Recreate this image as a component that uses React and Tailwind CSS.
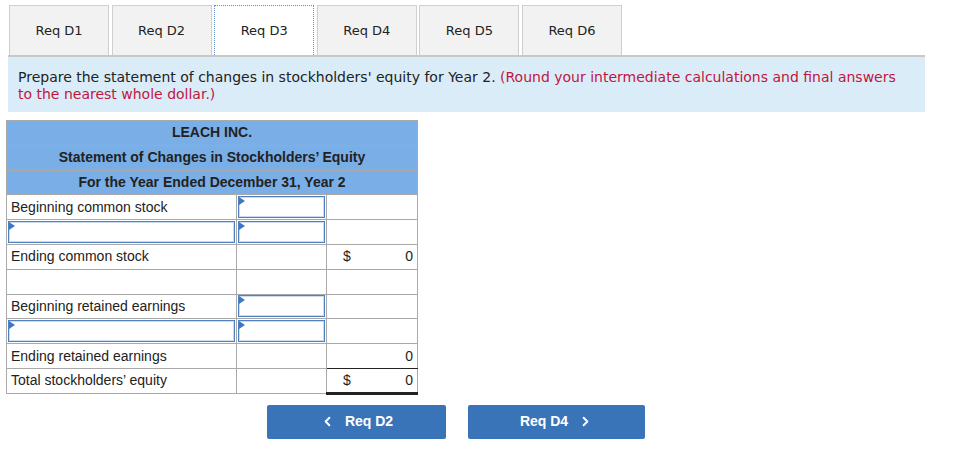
import { ChevronLeft, ChevronRight } from 'lucide-react';

const tabs = ['Req D1', 'Req D2', 'Req D3', 'Req D4', 'Req D5', 'Req D6'];

const rows = [
  { label: 'Beginning common stock', mid: 'input' },
  { label: 'input', mid: 'input' },
  { label: 'Ending common stock', dollar: true, value: '0' },
  { label: '' },
  { label: 'Beginning retained earnings', mid: 'input' },
  { label: 'input', mid: 'input' },
  { label: 'Ending retained earnings', value: '0', underline: 'single' },
  { label: "Total stockholders’ equity", dollar: true, value: '0', underline: 'double' },
];

function InputBox() {
  return (
    <div className="relative h-[22px] border border-[#4f80c0] bg-white shadow-[inset_0_0_0_1px_#c9dcf2]">
      <span className="absolute left-0 top-0 w-0 h-0 border-y-[4px] border-y-transparent border-l-[6px] border-l-[#3c78c8]" />
    </div>
  );
}

export default function App() {
  return (
    <div className="w-[953px] h-[469px] bg-white pt-[5px] font-['DejaVu_Sans',sans-serif]">
      {/* Tabs */}
      <div className="ml-[8px] w-[917px] flex gap-[2.6px] pl-[1px] border-b-2 border-[#c8c8c8]">
        {tabs.map((t, i) =>
          i === 2 ? (
            <div
              key={t}
              className="w-[100px] h-[50px] flex items-center justify-center text-[13px] text-[#222] bg-white border border-dotted border-[#6a8fc4] border-b-0"
            >
              {t}
            </div>
          ) : (
            <div
              key={t}
              className="w-[100px] h-[50px] flex items-center justify-center text-[13px] text-[#222] bg-[#f2f2f2] border border-[#cfcfcf] border-b-0"
            >
              {t}
            </div>
          )
        )}
      </div>

      {/* Instruction */}
      <div className="ml-[8px] w-[917px] h-[55px] bg-[#dbecf9] pl-[10px] pr-[20px] pt-[12px] text-[14px] leading-[17px] text-[#222]">
        Prepare the statement of changes in stockholders' equity for Year 2.{' '}
        <span className="text-[#c0163c]">
          (Round your intermediate calculations and final answers to the nearest whole dollar.)
        </span>
      </div>

      {/* Statement table */}
      <table className="ml-[6px] mt-[8px] border-collapse font-['Liberation_Sans',Arial,sans-serif] text-[14px] text-[#222]">
        <tbody>
          {['LEACH INC.', 'Statement of Changes in Stockholders’ Equity', 'For the Year Ended December 31, Year 2'].map((h) => (
            <tr key={h}>
              <td colSpan={3} className="h-[24.8px] bg-[#79aee6] border border-[#a9a9a9] text-center font-bold text-[14px] p-0">
                {h}
              </td>
            </tr>
          ))}
          {rows.map((r, i) => (
            <tr key={i}>
              <td className="w-[230px] h-[24.8px] border border-[#a9a9a9] p-0 px-[1px]">
                {r.label === 'input' ? <InputBox /> : <span className="pl-[3px]">{r.label}</span>}
              </td>
              <td className="w-[90px] h-[24.8px] border border-[#a9a9a9] p-0 px-[1px]">
                {r.mid === 'input' ? <InputBox /> : null}
              </td>
              <td
                className={
                  'w-[91px] h-[24.8px] border border-[#a9a9a9] p-0 ' +
                  (r.underline === 'single' ? 'border-b-[#222] ' : '') +
                  (r.underline === 'double' ? 'border-b-[3px] border-b-[#222] ' : '')
                }
              >
                <div className="flex justify-between px-[16px] pr-[4px]">
                  <span>{r.dollar ? '$' : ''}</span>
                  <span>{r.value || ''}</span>
                </div>
              </td>
            </tr>
          ))}
        </tbody>
      </table>

      {/* Navigation */}
      <div className="ml-[267px] mt-[10px] flex gap-[22px] font-['Liberation_Sans',Arial,sans-serif]">
        <button className="w-[179px] h-[34px] bg-[#3a74b8] rounded-[2px] text-white font-bold text-[14px] flex items-center justify-center gap-[10px]">
          <ChevronLeft size={15} strokeWidth={3} />
          <span>Req D2</span>
        </button>
        <button className="w-[177px] h-[34px] bg-[#3a74b8] rounded-[2px] text-white font-bold text-[14px] flex items-center justify-center gap-[10px]">
          <span>Req D4</span>
          <ChevronRight size={15} strokeWidth={3} />
        </button>
      </div>
    </div>
  );
}
